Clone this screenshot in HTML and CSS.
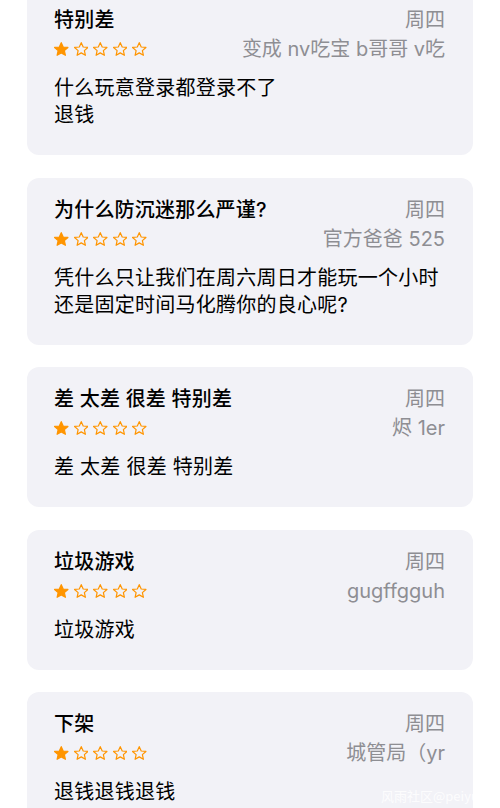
FILE: index.html
```html
<!DOCTYPE html>
<html lang="zh-CN">
<head>
    <meta charset="UTF-8">
    <meta name="viewport" content="width=device-width, initial-scale=1.0">
    <title>评论</title>
    <link rel="stylesheet" href="styles.css">
</head>
<body>
    <svg width="0" height="0" class="defs">
        <defs>
            <path id="star" d="M12 2.6l2.75 6.1 6.65.65-5 4.45 1.45 6.55L12 16.95 6.15 20.35l1.45-6.55-5-4.45 6.65-.65z"/>
        </defs>
    </svg>

    <div class="list">
        <!-- 评论 1 -->
        <div class="card">
            <div class="row">
                <span class="title">特别差</span>
                <span class="meta">周四</span>
            </div>
            <div class="row sub">
                <span class="stars">
                    <svg class="star on" viewBox="1.8 1.8 20.4 19.4"><use href="#star"/></svg>
                    <svg class="star" viewBox="1.8 1.8 20.4 19.4"><use href="#star"/></svg>
                    <svg class="star" viewBox="1.8 1.8 20.4 19.4"><use href="#star"/></svg>
                    <svg class="star" viewBox="1.8 1.8 20.4 19.4"><use href="#star"/></svg>
                    <svg class="star" viewBox="1.8 1.8 20.4 19.4"><use href="#star"/></svg>
                </span>
                <span class="meta">变成 nv吃宝 b哥哥 v吃</span>
            </div>
            <p class="text">什么玩意登录都登录不了<br>退钱</p>
        </div>

        <!-- 评论 2 -->
        <div class="card">
            <div class="row">
                <span class="title">为什么防沉迷那么严谨?</span>
                <span class="meta">周四</span>
            </div>
            <div class="row sub">
                <span class="stars">
                    <svg class="star on" viewBox="1.8 1.8 20.4 19.4"><use href="#star"/></svg>
                    <svg class="star" viewBox="1.8 1.8 20.4 19.4"><use href="#star"/></svg>
                    <svg class="star" viewBox="1.8 1.8 20.4 19.4"><use href="#star"/></svg>
                    <svg class="star" viewBox="1.8 1.8 20.4 19.4"><use href="#star"/></svg>
                    <svg class="star" viewBox="1.8 1.8 20.4 19.4"><use href="#star"/></svg>
                </span>
                <span class="meta">官方爸爸 525</span>
            </div>
            <p class="text">凭什么只让我们在周六周日才能玩一个小时<br>还是固定时间马化腾你的良心呢?</p>
        </div>

        <!-- 评论 3 -->
        <div class="card">
            <div class="row">
                <span class="title">差 太差 很差 特别差</span>
                <span class="meta">周四</span>
            </div>
            <div class="row sub">
                <span class="stars">
                    <svg class="star on" viewBox="1.8 1.8 20.4 19.4"><use href="#star"/></svg>
                    <svg class="star" viewBox="1.8 1.8 20.4 19.4"><use href="#star"/></svg>
                    <svg class="star" viewBox="1.8 1.8 20.4 19.4"><use href="#star"/></svg>
                    <svg class="star" viewBox="1.8 1.8 20.4 19.4"><use href="#star"/></svg>
                    <svg class="star" viewBox="1.8 1.8 20.4 19.4"><use href="#star"/></svg>
                </span>
                <span class="meta">烬 1er</span>
            </div>
            <p class="text">差 太差 很差 特别差</p>
        </div>

        <!-- 评论 4 -->
        <div class="card">
            <div class="row">
                <span class="title">垃圾游戏</span>
                <span class="meta">周四</span>
            </div>
            <div class="row sub">
                <span class="stars">
                    <svg class="star on" viewBox="1.8 1.8 20.4 19.4"><use href="#star"/></svg>
                    <svg class="star" viewBox="1.8 1.8 20.4 19.4"><use href="#star"/></svg>
                    <svg class="star" viewBox="1.8 1.8 20.4 19.4"><use href="#star"/></svg>
                    <svg class="star" viewBox="1.8 1.8 20.4 19.4"><use href="#star"/></svg>
                    <svg class="star" viewBox="1.8 1.8 20.4 19.4"><use href="#star"/></svg>
                </span>
                <span class="meta">gugffgguh</span>
            </div>
            <p class="text">垃圾游戏</p>
        </div>

        <!-- 评论 5 -->
        <div class="card">
            <div class="row">
                <span class="title">下架</span>
                <span class="meta">周四</span>
            </div>
            <div class="row sub">
                <span class="stars">
                    <svg class="star on" viewBox="1.8 1.8 20.4 19.4"><use href="#star"/></svg>
                    <svg class="star" viewBox="1.8 1.8 20.4 19.4"><use href="#star"/></svg>
                    <svg class="star" viewBox="1.8 1.8 20.4 19.4"><use href="#star"/></svg>
                    <svg class="star" viewBox="1.8 1.8 20.4 19.4"><use href="#star"/></svg>
                    <svg class="star" viewBox="1.8 1.8 20.4 19.4"><use href="#star"/></svg>
                </span>
                <span class="meta">城管局（yr</span>
            </div>
            <p class="text">退钱退钱退钱</p>
        </div>
    </div>

    <div class="watermark">风雨社区@peiyu</div>
</body>
</html>
```

FILE: styles.css
```css
body { margin: 0; background: #fff; font-family: Inter, "Noto Sans CJK SC", sans-serif; color: #000; overflow: hidden; }
.defs { position: absolute; }
.list { display: flex; flex-direction: column; gap: 22.5px; padding: 0 27px; margin-top: -12px; }
.card { background: #f2f2f7; border-radius: 12px; padding: 19px 28px 26px 27px; }
.row { display: flex; justify-content: space-between; align-items: center; height: 26px; }
.row.sub { margin-top: 3px; }
.title { font-size: 20px; font-weight: 500; line-height: 26px; letter-spacing: 0.2px; }
.meta { font-size: 20px; color: #8e8e93; line-height: 26px; }
.stars { display: flex; gap: 5px; }
.star { width: 14.5px; height: 14px; fill: none; stroke: #ff9500; stroke-width: 1.7; stroke-linejoin: round; }
.star.on { fill: #ff9500; }
.text { margin: 13px 0 0; font-size: 20px; line-height: 27px; letter-spacing: 0.25px; }
.watermark { position: absolute; left: 381px; top: 786px; font-size: 13px; font-family: "Noto Sans CJK SC", sans-serif; color: rgba(255, 255, 255, 0.85); }
```
